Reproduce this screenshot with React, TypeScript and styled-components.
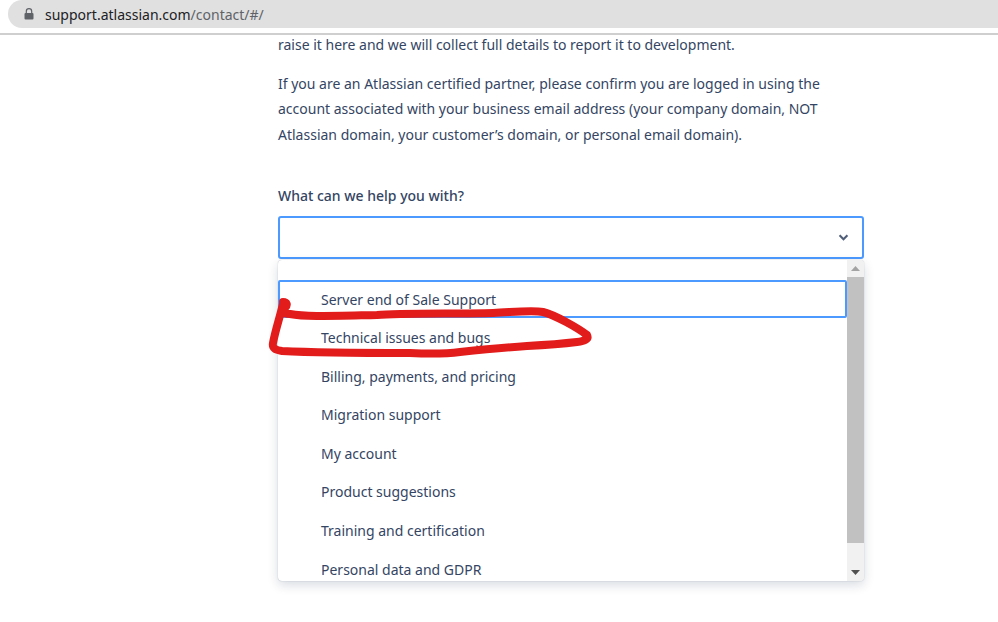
import React from 'react';
import styled, { createGlobalStyle } from 'styled-components';

const GlobalStyle = createGlobalStyle`
  html, body {
    margin: 0;
    height: 100%;
    background: #fff;
    overflow: hidden;
  }
`;

const Page = styled.div`
  width: 998px;
  height: 622px;
  position: relative;
  overflow: hidden;
  font-family: 'Noto Sans', 'Open Sans', sans-serif;
  color: #344563;
`;

const BrowserBar = styled.div`
  height: 33px;
  padding-left: 8px;
  border-bottom: 2px solid #cfcfcf;
`;

const AddressPill = styled.div`
  height: 28px;
  display: flex;
  align-items: center;
  gap: 11px;
  padding-left: 16px;
  background: #e0e0e0;
  border-radius: 14px 0 0 14px;
  font-size: 14px;
  color: #202124;
`;

const UrlTail = styled.span`
  color: #5f6368;
`;

const Column = styled.main`
  width: 586px;
  margin-left: 278px;
  margin-top: -3px;
`;

const Paragraph = styled.p`
  margin: 0 0 13px;
  font-size: 14px;
  line-height: 25.7px;
`;

const FieldLabel = styled.label`
  display: block;
  margin-top: 35px;
  margin-bottom: 8px;
  font-size: 14px;
  line-height: 25px;
  font-weight: 550;
`;

const SelectBox = styled.div`
  height: 43px;
  box-sizing: border-box;
  border: 2px solid #4c9aff;
  border-radius: 3px;
  display: flex;
  align-items: center;
  justify-content: flex-end;
  padding-right: 13px;
`;

const Menu = styled.div`
  margin-top: 1px;
  height: 321px;
  display: flex;
  border-radius: 4px;
  overflow: hidden;
  background: #fff;
  box-shadow: 0 4px 11px rgba(9, 30, 66, 0.16), 0 0 1px rgba(9, 30, 66, 0.4);
`;

const OptionList = styled.ul`
  flex: 1;
  margin: 0;
  padding: 19.9px 0 0;
  list-style: none;
  overflow: hidden;
`;

const Option = styled.li<{ $focused?: boolean }>`
  height: 38.6px;
  box-sizing: border-box;
  display: flex;
  align-items: center;
  padding-left: 41px;
  font-size: 14px;
  border: 2px solid ${({ $focused }) => ($focused ? '#4c9aff' : 'transparent')};
  border-radius: 2px;
`;

const ScrollTrack = styled.div`
  width: 17px;
  background: #f1f1f1;
  display: flex;
  flex-direction: column;
  align-items: center;
`;

const ScrollButton = styled.div`
  height: 17px;
  flex: none;
  display: flex;
  align-items: center;
  justify-content: center;
`;

const ScrollThumb = styled.div`
  width: 100%;
  height: 266px;
  background: #c1c1c1;
`;

const Spacer = styled.div`
  flex: 1;
`;

const Scribble = styled.svg`
  position: absolute;
  left: 260px;
  top: 290px;
  pointer-events: none;
`;

const options = [
  'Server end of Sale Support',
  'Technical issues and bugs',
  'Billing, payments, and pricing',
  'Migration support',
  'My account',
  'Product suggestions',
  'Training and certification',
  'Personal data and GDPR',
];

export default function App() {
  return (
    <Page>
      <GlobalStyle />
      <BrowserBar>
        <AddressPill>
          <svg width="10" height="12" viewBox="0 0 10 12">
            <path
              d="M2.3 5V3.4a2.7 2.7 0 0 1 5.4 0V5"
              fill="none"
              stroke="#5f6368"
              strokeWidth="1.2"
            />
            <rect x="0.5" y="5" width="9" height="6.6" rx="1" fill="#5f6368" />
          </svg>
          <span>
            support.atlassian.com<UrlTail>/contact/#/</UrlTail>
          </span>
        </AddressPill>
      </BrowserBar>
      <Column>
        <Paragraph>raise it here and we will collect full details to report it to development.</Paragraph>
        <Paragraph>
          If you are an Atlassian certified partner, please confirm you are logged in using the
          account associated with your business email address (your company domain, NOT
          Atlassian domain, your customer’s domain, or personal email domain).
        </Paragraph>
        <FieldLabel>What can we help you with?</FieldLabel>
        <SelectBox>
          <svg width="11" height="7" viewBox="0 0 12 8">
            <path d="M1.5 1.5 6 6l4.5-4.5" fill="none" stroke="#505f79" strokeWidth="2.4" />
          </svg>
        </SelectBox>
        <Menu>
          <OptionList>
            {options.map((label, i) => (
              <Option key={label} $focused={i === 0}>
                {label}
              </Option>
            ))}
          </OptionList>
          <ScrollTrack>
            <ScrollButton>
              <svg width="9" height="5" viewBox="0 0 9 5">
                <path d="M4.5 0 9 5H0z" fill="#a3a3a3" />
              </svg>
            </ScrollButton>
            <ScrollThumb />
            <Spacer />
            <ScrollButton>
              <svg width="9" height="5" viewBox="0 0 9 5">
                <path d="M0 0h9L4.5 5z" fill="#505050" />
              </svg>
            </ScrollButton>
          </ScrollTrack>
        </Menu>
      </Column>
      <Scribble width="340" height="75" viewBox="0 0 340 75">
        <path
          d="M23 12 C27 12 28 15 25 18 C22 22 22 24 30 24 C45 27 70 26 117 25 C140 23 200 24 233 23 C255 22 272 20 283 22 C295 25 318 38 327 45 C329 49 325 51 317 52 C300 54 285 55 267 56 C240 58 220 60 200 62 C185 64 170 64 150 63 C110 63 60 63 22 61 C15 60 12 58 13 53 C15 42 19 30 23 14"
          fill="none"
          stroke="#e21b1b"
          strokeWidth="8"
          strokeLinecap="round"
          strokeLinejoin="round"
        />
      </Scribble>
    </Page>
  );
}
